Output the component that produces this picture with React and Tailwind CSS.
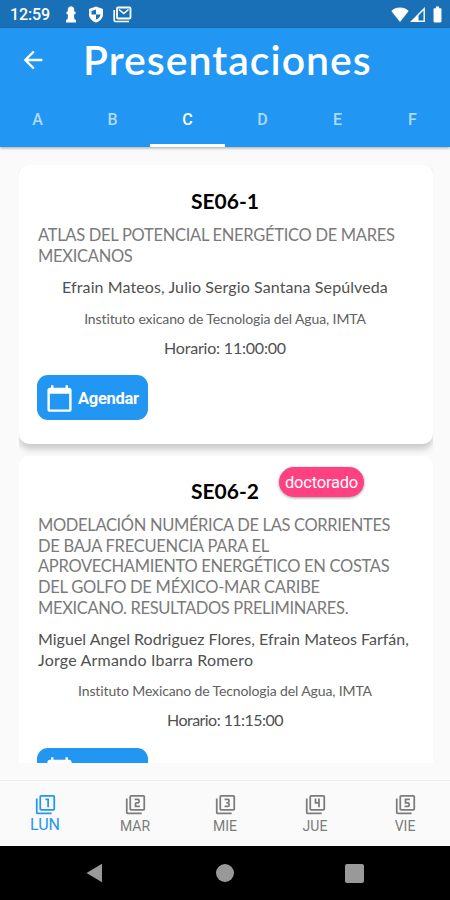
import { useState } from "react";
import {
  MdArrowBack,
  MdBatteryFull,
  MdCalendarToday,
  MdOutlineFilter1,
  MdOutlineFilter2,
  MdOutlineFilter3,
  MdOutlineFilter4,
  MdOutlineFilter5,
} from "react-icons/md";

const TABS = ["A", "B", "C", "D", "E", "F"];

const DAYS = [
  { label: "LUN", Icon: MdOutlineFilter1 },
  { label: "MAR", Icon: MdOutlineFilter2 },
  { label: "MIE", Icon: MdOutlineFilter3 },
  { label: "JUE", Icon: MdOutlineFilter4 },
  { label: "VIE", Icon: MdOutlineFilter5 },
];

function StatusBar() {
  return (
    <div className="h-7 shrink-0 bg-[#1a70b7] flex items-center justify-between pl-[10px] pr-[7px] text-white">
      <div className="flex items-center">
        <span className="w-[41px] mt-[2px] text-[16px] leading-7 font-medium tracking-[-0.1px] whitespace-nowrap">12:59</span>
        <svg className="ml-[14px] mt-px" width="12" height="17" viewBox="0 0 12 17" fill="currentColor">
          <path d="M6 .3a3.400 3.400 0 0 1 3 4.700l1.500 1v2.300H9l.3 4.700 1.700 1v2.500H1V14l1.700-1L3 8.300H1.500V6L3 5A3.400 3.400 0 0 1 6 .3z" />
        </svg>
        <svg className="ml-[11px] mt-px" width="16" height="17" viewBox="0 0 16 17">
          <path d="M8 .5 15 3v5.200c0 3.800-2.800 7-7 8.300-4.200-1.300-7-4.500-7-8.300V3z" fill="currentColor" />
          <path d="M8 3.500v5H3.500V5zM8 8.500h4.500c-.4 2.500-2 4.200-4.500 5z" fill="#1a70b7" />
        </svg>
        <svg className="ml-[9px] mt-px" width="19" height="17" viewBox="0 0 19 17" fill="none" stroke="currentColor">
          <rect x="4" y="1.500" width="13.500" height="11" rx="1" strokeWidth="1.800" />
          <path d="M1.200 4v10.200q0 1.300 1.300 1.300h13.500" strokeWidth="1.700" />
          <path d="M6 3.500 10.800 7.500 15.500 3.500" strokeWidth="1.600" />
        </svg>
      </div>
      <div className="flex items-center">
        <svg className="mt-px" width="18" height="15" viewBox="0 0 18 15" fill="currentColor">
          <path d="M9 15 .3 4C5-.6 13-.6 17.700 4z" />
        </svg>
        <svg className="ml-[1px] mt-px" width="15" height="15" viewBox="0 0 15 15">
          <path d="M1.800 14.200 14.200 1.800v12.400z" fill="none" stroke="currentColor" strokeWidth="1.400" />
          <path d="M2 14 8.500 7.300V14z" fill="currentColor" />
        </svg>
        <MdBatteryFull className="ml-[3px] -mr-1 size-[19px]" />
      </div>
    </div>
  );
}

function AgendarButton() {
  return (
    <button className="-ml-px w-[111px] h-[45px] shrink-0 rounded-[11px] bg-[#2196f3] text-white flex items-center pl-[8px]">
      <MdCalendarToday className="mt-px size-[29px] shrink-0" />
      <span className="mt-[2px] ml-[4px] text-[16.500px] font-bold tracking-[-0.3px]">Agendar</span>
    </button>
  );
}

function Line({ className = "", children }) {
  return <div className={`whitespace-nowrap ${className}`}>{children}</div>;
}

export default function App() {
  const [tab, setTab] = useState("C");
  const [day, setDay] = useState("LUN");

  return (
    <div className="w-[450px] h-[900px] flex flex-col overflow-hidden bg-[#fafafa] font-['Roboto',sans-serif]">
      <StatusBar />

      {/* Header */}
      <header className="relative h-[119px] shrink-0 bg-[#2196f3] text-white flex flex-col shadow-[0_1px_3px_rgba(0,0,0,0.35)]">
        <div className="h-[63px] flex items-center pl-[19px]">
          <MdArrowBack className="size-[28px] mt-px" />
          <h1 className="ml-[36px] font-['Lato',sans-serif] font-semibold text-[41px] leading-none tracking-[1px] whitespace-nowrap">
            Presentaciones
          </h1>
        </div>
        <nav className="flex h-[56px]">
          {TABS.map((t) => (
            <button
              key={t}
              onClick={() => setTab(t)}
              className={`w-[75px] pt-[4px] border-b-3 text-[16px] font-medium ${
                t === tab ? "border-white text-white" : "border-transparent text-[#b1dafb]"
              }`}
            >
              {t}
            </button>
          ))}
        </nav>
      </header>

      {/* Cards */}
      <main className="mt-[18px] ml-[19px] w-[414px] h-[598px] shrink-0 overflow-hidden flex flex-col gap-3 font-['Lato',sans-serif]">
        <article className="h-[279px] shrink-0 rounded-[10px] bg-white shadow-[0_5px_7px_rgba(0,0,0,0.2)] pl-[19px] pr-[21px] flex flex-col">
          <Line className="mt-[23px] h-[25px] leading-[25px] text-center text-[21px] font-bold text-black">SE06-1</Line>
          <div className="mt-[12px] text-[16.500px] leading-[20.700px] tracking-[-0.29px] text-[#7a7a7a]">
            <Line>ATLAS DEL POTENCIAL ENERGÉTICO DE MARES</Line>
            <Line>MEXICANOS</Line>
          </div>
          <Line className="mt-[10px] h-[22px] leading-[22px] text-center text-[16px] tracking-[0.1px] text-[#505050]">
            Efrain Mateos, Julio Sergio Santana Sepúlveda
          </Line>
          <Line className="mt-[11px] h-5 leading-5 text-center text-[14px] tracking-[-0.11px] text-[#606060]">
            Instituto exicano de Tecnologia del Agua, IMTA
          </Line>
          <Line className="mt-[9px] h-5 leading-5 text-center text-[16px] tracking-[-0.2px] text-[#505050]">
            Horario: 11:00:00
          </Line>
          <div className="mt-[17px] font-['Roboto',sans-serif]">
            <AgendarButton />
          </div>
        </article>

        <article className="relative h-[380px] shrink-0 rounded-t-[10px] bg-white pl-[19px] pr-[21px] flex flex-col">
          <span className="absolute left-[260px] top-[11px] w-[85px] h-[30px] rounded-full bg-[#ff4081] text-white font-['Roboto',sans-serif] text-[16.500px] leading-[31px] tracking-[-0.2px] text-center shadow-[0_1px_3px_rgba(0,0,0,0.4)]">
            doctorado
          </span>
          <Line className="mt-[22px] h-[25px] leading-[25px] text-center text-[21px] font-bold text-black">SE06-2</Line>
          <div className="mt-[12px] text-[16.500px] leading-[20.700px] tracking-[-0.34px] text-[#7a7a7a]">
            <Line>MODELACIÓN NUMÉRICA DE LAS CORRIENTES</Line>
            <Line className="tracking-[-0.26px]">DE BAJA FRECUENCIA PARA EL</Line>
            <Line className="tracking-[-0.3px]">APROVECHAMIENTO ENERGÉTICO EN COSTAS</Line>
            <Line className="tracking-[-0.26px]">DEL GOLFO DE MÉXICO-MAR CARIBE</Line>
            <Line>MEXICANO. RESULTADOS PRELIMINARES.</Line>
          </div>
          <div className="mt-[9px] text-[16px] leading-[21px] tracking-[0.02px] text-[#505050]">
            <Line>Miguel Angel Rodriguez Flores, Efrain Mateos Farfán,</Line>
            <Line className="tracking-[0.2px]">Jorge Armando Ibarra Romero</Line>
          </div>
          <Line className="mt-[11px] h-5 leading-5 text-center text-[14px] tracking-[-0.12px] text-[#606060]">
            Instituto Mexicano de Tecnologia del Agua, IMTA
          </Line>
          <Line className="mt-[9px] h-5 leading-5 text-center text-[16px] tracking-[-0.55px] text-[#505050]">
            Horario: 11:15:00
          </Line>
          <div className="mt-[18px] font-['Roboto',sans-serif]">
            <AgendarButton />
          </div>
        </article>
      </main>

      {/* Bottom navigation */}
      <nav className="mt-auto h-[66px] shrink-0 flex border-t border-[#eeeeee]">
        {DAYS.map(({ label, Icon }) => (
          <button
            key={label}
            onClick={() => setDay(label)}
            className={`w-[90px] flex flex-col items-center pt-[13px] ${
              label === day ? "text-[#2196f3]" : "text-[#7c7c7c]"
            }`}
          >
            <Icon className="size-[21px]" />
            <span className={`leading-5 ${label === day ? "text-[16px]" : "text-[14px] mt-px"}`}>{label}</span>
          </button>
        ))}
      </nav>

      {/* Android navigation keys */}
      <div className="h-[54px] shrink-0 bg-black flex items-center pl-[86px] text-[#999999]">
        <svg width="17" height="20" viewBox="0 0 17 20" fill="currentColor">
          <path d="M.5 10 16 .8v18.400z" />
        </svg>
        <div className="ml-[113px] size-[18px] rounded-full bg-[#999999]" />
        <div className="ml-[111px] size-[19px] rounded-[2px] bg-[#999999]" />
      </div>
    </div>
  );
}
